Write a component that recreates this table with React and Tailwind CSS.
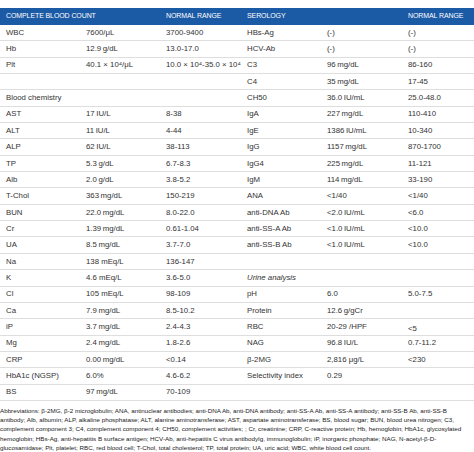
import React from "react";

const T = "\u2009";
const rows = [
  ["WBC", `7600/μL`, "3700-9400", "HBs-Ag", "(-)", "(-)"],
  ["Hb", `12.9${T}g/dL`, "13.0-17.0", "HCV-Ab", "(-)", "(-)"],
  ["Plt", `40.1 × 10⁴/μL`, "10.0 × 10⁴-35.0 × 10⁴", "C3", `96${T}mg/dL`, "86-160"],
  ["", "", "", "C4", `35${T}mg/dL`, "17-45"],
  ["Blood chemistry", "", "", "CH50", `36.0${T}IU/mL`, "25.0-48.0"],
  ["AST", `17${T}IU/L`, "8-38", "IgA", `227${T}mg/dL`, "110-410"],
  ["ALT", `11${T}IU/L`, "4-44", "IgE", `1386${T}IU/mL`, "10-340"],
  ["ALP", `62${T}IU/L`, "38-113", "IgG", `1157${T}mg/dL`, "870-1700"],
  ["TP", `5.3${T}g/dL`, "6.7-8.3", "IgG4", `225${T}mg/dL`, "11-121"],
  ["Alb", `2.0${T}g/dL`, "3.8-5.2", "IgM", `114${T}mg/dL`, "33-190"],
  ["T-Chol", `363${T}mg/dL`, "150-219", "ANA", "<1/40", "<1/40"],
  ["BUN", `22.0${T}mg/dL`, "8.0-22.0", "anti-DNA Ab", `<2.0${T}IU/mL`, "<6.0"],
  ["Cr", `1.39${T}mg/dL`, "0.61-1.04", "anti-SS-A Ab", `<1.0${T}IU/mL`, "<10.0"],
  ["UA", `8.5${T}mg/dL`, "3.7-7.0", "anti-SS-B Ab", `<1.0${T}IU/mL`, "<10.0"],
  ["Na", "138 mEq/L", "136-147", "", "", ""],
  ["K", "4.6 mEq/L", "3.6-5.0", "URINE", "", ""],
  ["Cl", "105 mEq/L", "98-109", "pH", "6.0", "5.0-7.5"],
  ["Ca", `7.9${T}mg/dL`, "8.5-10.2", "Protein", `12.6${T}g/gCr`, ""],
  ["iP", `3.7${T}mg/dL`, "2.4-4.3", "RBC", "20-29 /HPF", "LOW5"],
  ["Mg", `2.4${T}mg/dL`, "1.8-2.6", "NAG", `96.8${T}IU/L`, "0.7-11.2"],
  ["CRP", `0.00${T}mg/dL`, "<0.14", "β-2MG", `2,816 μg/L`, "<230"],
  ["HbA1c (NGSP)", "6.0%", "4.6-6.2", "Selectivity index", "0.29", ""],
  ["BS", `97${T}mg/dL`, "70-109", "", "", ""],
];

const abbr = [
  "Abbreviations: β-2MG, β-2 microglobulin; ANA, antinuclear antibodies; anti-DNA Ab, anti-DNA antibody; anti-SS-A Ab, anti-SS-A antibody; anti-SS-B Ab, anti-SS-B",
  "antibody; Alb, albumin; ALP, alkaline phosphatase; ALT, alanine aminotransferase; AST, aspartate aminotransferase; BS, blood sugar; BUN, blood urea nitrogen; C3,",
  "complement component 3; C4, complement component 4; CH50, complement activities; ; Cr, creatinine; CRP, C-reactive protein; Hb, hemoglobin; HbA1c, glycosylated",
  "hemoglobin; HBs-Ag, anti-hepatitis B surface antigen; HCV-Ab, anti-hepatitis C virus antibodyIg, immunoglobulin; iP, inorganic phosphate; NAG, N-acetyl-β-D-",
  "glucosamidase; Plt, platelet; RBC, red blood cell; T-Chol, total cholesterol; TP, total protein; UA, uric acid; WBC, white blood cell count.",
];

const grid = "grid grid-cols-[80px_80px_81px_80px_81px_1fr]";

function Cell({ v }) {
  if (v === "URINE") return <div className="pl-[6px] italic">Urine analysis</div>;
  if (v === "LOW5") return <div className="pl-[6px] pt-[4px]">{"<5"}</div>;
  return <div className="pl-[6px] whitespace-nowrap">{v}</div>;
}

export default function App() {
  return (
    <div
      className="w-[474px] h-[452px] overflow-hidden bg-white text-[#333333]"
      style={{ fontFamily: '"Liberation Sans", Arial, sans-serif' }}
    >
      <div className="h-[8px]" />
      <div className={`${grid} h-[17px] items-center bg-[#1b5aa5] text-white text-[7px] tracking-[-0.1px]`}>
        <div className="pl-[6px] col-span-2">COMPLETE BLOOD COUNT</div>
        <div className="pl-[6px]">NORMAL RANGE</div>
        <div className="pl-[6px] col-span-2">SEROLOGY</div>
        <div className="pl-[6px]">NORMAL RANGE</div>
      </div>
      {rows.map((r, i) => (
        <div
          key={i}
          className={`${grid} h-[16.35px] items-center border-b border-[#dedede] text-[7.8px] leading-none`}
        >
          {r.map((v, j) => (
            <Cell key={j} v={v} />
          ))}
        </div>
      ))}
      <div className="pt-[5px] text-[6.25px] leading-[9.2px] text-[#222222]">
        {abbr.map((l, i) => (
          <div key={i} className="whitespace-nowrap">
            {l}
          </div>
        ))}
      </div>
    </div>
  );
}
